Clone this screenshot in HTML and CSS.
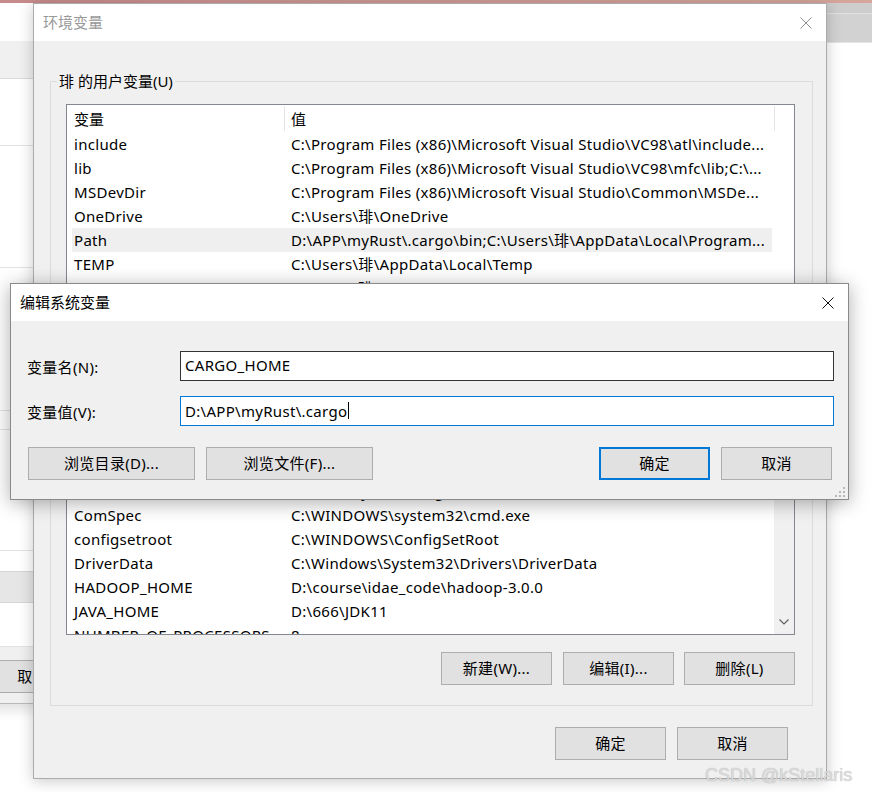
FILE: index.html
```html
<!DOCTYPE html>
<html lang="zh-CN">
<head>
<meta charset="utf-8">
<title>环境变量</title>
<link rel="stylesheet" href="styles.css">
</head>
<body>
<div class="desk">
  <div class="accent"></div>

  <div class="win back-left">
    <div class="bl-title"></div>
    <div class="bl-band"></div>
    <div class="bl-seg h67"></div>
    <div class="bl-seg h122"></div>
    <div class="bl-seg h143"></div>
    <div class="bl-seg h19"></div>
    <div class="bl-seg h121"></div>
    <div class="bl-plain"></div>
    <div class="bl-strip"></div>
    <div class="bl-seg h44"></div>
    <div class="bl-foot"><div class="btn bl-btn">取消</div></div>
  </div>

  <div class="win back-right">
    <div class="br-top"></div>
    <div class="br-bottom"></div>
  </div>

  <div class="win dlg main">
    <div class="titlebar">
      <span class="title inactive">环境变量</span>
      <svg class="x inactive" width="12" height="12" viewBox="0 0 12 12"><path d="M0.5 0.5L11.5 11.5M11.5 0.5L0.5 11.5" stroke="currentColor" stroke-width="1" fill="none"/></svg>
    </div>
    <div class="dlg-body main-body">
      <div class="group">
        <span class="group-label">琲 的用户变量(U)</span>
        <div class="listview">
          <div class="lv-head">
            <div class="lv-hcell hc-name">变量</div>
            <div class="lv-hcell hc-val">值</div>
          </div>
          <div class="lv-rows">
            <div class="lv-row"><span class="c-name">include</span><span class="c-val">C:\Program Files (x86)\Microsoft Visual Studio\VC98\atl\include...</span></div>
            <div class="lv-row"><span class="c-name">lib</span><span class="c-val">C:\Program Files (x86)\Microsoft Visual Studio\VC98\mfc\lib;C:\...</span></div>
            <div class="lv-row"><span class="c-name">MSDevDir</span><span class="c-val">C:\Program Files (x86)\Microsoft Visual Studio\Common\MSDe...</span></div>
            <div class="lv-row"><span class="c-name">OneDrive</span><span class="c-val">C:\Users\琲\OneDrive</span></div>
            <div class="lv-row sel"><span class="c-name">Path</span><span class="c-val">D:\APP\myRust\.cargo\bin;C:\Users\琲\AppData\Local\Program...</span></div>
            <div class="lv-row"><span class="c-name">TEMP</span><span class="c-val">C:\Users\琲\AppData\Local\Temp</span></div>
            <div class="lv-row"><span class="c-name">TMP</span><span class="c-val">C:\Users\琲\AppData\Local\Temp</span></div>
            <div class="lv-gap"></div>
            <div class="lv-row"><span class="c-name">CARGO_HOME</span><span class="c-val">D:\APP\myRust\.cargo</span></div>
            <div class="lv-row"><span class="c-name">ComSpec</span><span class="c-val">C:\WINDOWS\system32\cmd.exe</span></div>
            <div class="lv-row"><span class="c-name">configsetroot</span><span class="c-val">C:\WINDOWS\ConfigSetRoot</span></div>
            <div class="lv-row"><span class="c-name">DriverData</span><span class="c-val">C:\Windows\System32\Drivers\DriverData</span></div>
            <div class="lv-row"><span class="c-name">HADOOP_HOME</span><span class="c-val">D:\course\idae_code\hadoop-3.0.0</span></div>
            <div class="lv-row"><span class="c-name">JAVA_HOME</span><span class="c-val">D:\666\JDK11</span></div>
            <div class="lv-row"><span class="c-name">NUMBER_OF_PROCESSORS</span><span class="c-val">8</span></div>
          </div>
          <div class="vscroll">
            <svg class="chev" width="10" height="6" viewBox="0 0 10 6"><path d="M0.5 0.5L5 5L9.5 0.5" stroke="#606060" stroke-width="1.2" fill="none"/></svg>
          </div>
        </div>
        <div class="btn-row group-btns">
          <div class="btn">新建(W)...</div>
          <div class="btn">编辑(I)...</div>
          <div class="btn">删除(L)</div>
        </div>
      </div>
      <div class="btn-row main-btns">
        <div class="btn">确定</div>
        <div class="btn">取消</div>
      </div>
    </div>
  </div>

  <div class="win dlg edit">
    <div class="titlebar">
      <span class="title">编辑系统变量</span>
      <svg class="x" width="12" height="12" viewBox="0 0 12 12"><path d="M0.5 0.5L11.5 11.5M11.5 0.5L0.5 11.5" stroke="currentColor" stroke-width="1" fill="none"/></svg>
    </div>
    <div class="dlg-body edit-body">
      <div class="field-row">
        <span class="field-label">变量名(N):</span>
        <div class="field name">CARGO_HOME</div>
      </div>
      <div class="field-row second">
        <span class="field-label">变量值(V):</span>
        <div class="field focus"><span>D:\APP\myRust\.cargo</span><span class="caret"></span></div>
      </div>
      <div class="btn-row edit-btns">
        <div class="btn wide">浏览目录(D)...</div>
        <div class="btn wide">浏览文件(F)...</div>
        <div class="spacer"></div>
        <div class="btn default">确定</div>
        <div class="btn">取消</div>
      </div>
      <div class="grip">
        <i style="left:10px;top:0"></i>
        <i style="left:6px;top:4px"></i><i style="left:10px;top:4px"></i>
        <i style="left:2px;top:8px"></i><i style="left:6px;top:8px"></i><i style="left:10px;top:8px"></i>
      </div>
    </div>
  </div>

  <div class="watermark">CSDN @kStellaris</div>
</div>
</body>
</html>
```

FILE: styles.css
```css
* { box-sizing: border-box; }
html, body { margin: 0; padding: 0; }
body {
  width: 872px;
  height: 792px;
  overflow: hidden;
  background: #ffffff;
  font-family: "Noto Sans", "Noto Sans CJK SC", sans-serif;
  font-size: 15px;
  letter-spacing: 0.3px;
  color: #000;
}
.desk { position: relative; width: 872px; height: 792px; overflow: hidden; background: #fff; }

.accent {
  height: 3px;
  background: linear-gradient(90deg, #c98c8c 0%, #cf9a94 50%, #d6a69c 100%);
}

.win { position: absolute; }

/* left background window */
.back-left {
  left: -60px;
  top: 3px;
  width: 200px;
  background: #fff;
  display: flex;
  flex-direction: column;
  border-bottom: 1px solid #b9b9b9;
  box-shadow: 0 6px 12px rgba(0,0,0,0.12);
}
.bl-title { height: 38px; background: #fff; }
.bl-band { height: 38px; background: #f0f0f0; border-bottom: 1px solid #dadada; }
.bl-seg { border-bottom: 1px solid #e3e3e3; }
.h67 { height: 67px; }
.h122 { height: 122px; }
.h143 { height: 143px; }
.h19 { height: 19px; }
.h121 { height: 121px; }
.h44 { height: 44px; }
.bl-plain { height: 20px; }
.bl-strip { height: 32px; background: #e6e6e6; border-top: 1px solid #d6d6d6; border-bottom: 1px solid #d6d6d6; }
.bl-foot { height: 56px; background: #f0f0f0; padding-top: 13px; padding-left: 37px; }
.bl-btn { width: 111px; }

/* right background window strip */
.back-right {
  left: 800px;
  top: 3px;
  width: 80px;
  height: 40px;
  background: #d2d2d2;
  border-bottom: 1px solid #e4e4e4;
}
.br-top { height: 11px; background: #cdcdcd; border-bottom: 1px solid #e2e2e2; }

/* dialogs */
.dlg {
  background: #f0f0f0;
  display: flex;
  flex-direction: column;
}
.main {
  left: 33px;
  top: 3px;
  width: 794px;
  height: 776px;
  border: 1px solid #ababab;
  box-shadow: 0 2px 14px rgba(0,0,0,0.22);
}
.edit {
  left: 10px;
  top: 283px;
  width: 839px;
  height: 217px;
  border: 1px solid #8a8a8a;
  box-shadow: 0 3px 18px rgba(0,0,0,0.32);
}
.titlebar {
  flex: none;
  height: 37px;
  background: #fff;
  display: flex;
  align-items: center;
  justify-content: space-between;
  padding: 0 14px 0 9px;
}
.title { font-size: 15px; line-height: 20px; color: #000; letter-spacing: 0; margin-top: -1px; }
.title.inactive { color: #999999; }
.x { display: block; color: #111; }
.x.inactive { color: #8f8f8f; }

.dlg-body { flex: 1; position: relative; display: flex; flex-direction: column; }

/* main body */
.main-body { padding: 0 13px 0 16px; }
.group {
  position: relative;
  margin-top: 40px;
  border: 1px solid #dcdcdc;
  padding: 22px 17px 20px 15px;
}
.group-label {
  position: absolute;
  top: -11px;
  left: 6px;
  padding: 0 2px;
  line-height: 20px;
  background: #f0f0f0;
  white-space: nowrap;
  letter-spacing: 0;
}

.listview {
  position: relative;
  height: 531px;
  border: 1px solid #828790;
  background: #fff;
  overflow: hidden;
}
.lv-head { display: flex; height: 27px; }
.lv-hcell {
  height: 25px;
  margin: 1px 0;
  line-height: 26px;
  border-right: 1px solid #e5e5e5;
  white-space: nowrap;
  letter-spacing: 0;
}
.hc-name { width: 218px; padding-left: 7px; }
.hc-val { width: 490px; padding-left: 6px; }

.lv-rows { padding-left: 5px; }
.lv-row { display: flex; width: 700px; height: 24px; line-height: 24px; white-space: nowrap; }
.lv-row.sel { background: #efefef; }
.c-name { width: 212px; flex: none; padding-left: 2px; overflow: hidden; }
.c-val { width: 488px; flex: none; padding-left: 7px; overflow: hidden; }
.lv-gap { height: 179px; }

.vscroll {
  position: absolute;
  right: 0;
  top: 340px;
  bottom: 0;
  width: 20px;
  background: #f0f0f0;
  display: flex;
  flex-direction: column;
  justify-content: flex-end;
  align-items: center;
  padding-bottom: 9px;
}
.chev { display: block; }

.btn-row { display: flex; }
.btn {
  height: 33px;
  width: 111px;
  flex: none;
  background: #e1e1e1;
  border: 1px solid #adadad;
  display: flex;
  align-items: center;
  justify-content: center;
  white-space: nowrap;
  line-height: 20px;
  padding-bottom: 2px;
}
.btn.default { border: 2px solid #0078d7; }
.btn.wide { width: 167px; }
.group-btns { margin-top: 17px; justify-content: flex-end; gap: 11px; }
.group-btns .btn:last-child { margin-left: -1px; }
.main-btns { margin-top: 21px; justify-content: flex-end; gap: 11px; padding-right: 25px; }

/* edit body */
.edit-body { padding: 30px 14px 0 16px; }
.field-row { display: flex; align-items: center; }
.field-row.second { margin-top: 15px; }
.field-label { width: 153px; flex: none; white-space: nowrap; }
.field {
  flex: 1;
  height: 30px;
  background: #fff;
  border: 1px solid #333;
  padding-left: 4px;
  padding-bottom: 1px;
  display: flex;
  align-items: center;
  white-space: nowrap;
}
.field.name { padding-bottom: 3px; }
.field.focus { border-color: #0078d7; }
.caret { display: inline-block; width: 1px; height: 17px; background: #000; margin-left: 1px; }
.edit-btns { margin-top: 21px; padding: 0 2px 0 1px; gap: 11px; }
.spacer { flex: 1; }

.grip { position: absolute; right: 3px; bottom: 2px; width: 12px; height: 10px; }
.grip i { position: absolute; width: 2px; height: 2px; background: #b8b8b8; }

.watermark {
  position: absolute;
  left: 705px;
  top: 764px;
  font-family: "Liberation Sans", Arial, sans-serif;
  font-size: 18px;
  line-height: 22px;
  letter-spacing: 0;
  color: #dadada;
  text-shadow: 0 0 1px rgba(0,0,0,0.28);
  white-space: nowrap;
}
```
